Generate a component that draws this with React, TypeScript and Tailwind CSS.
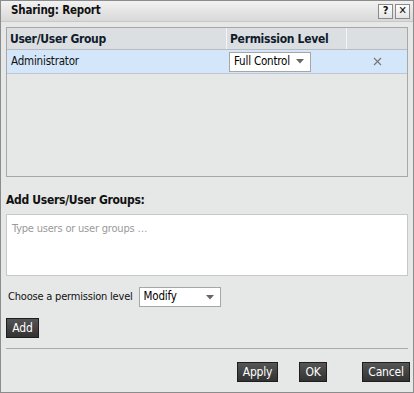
import React from 'react';

const font = { fontFamily: '"DejaVu Sans Condensed", "DejaVu Sans", sans-serif' };

function Caret() {
  return (
    <svg width="8" height="5" viewBox="0 0 8 5" className="shrink-0">
      <path d="M0 0h8L4 4.5z" fill="#666" />
    </svg>
  );
}

function SelectBox({ value }: { value: string }) {
  return (
    <div className="flex h-[20px] w-[82px] items-center justify-between border border-[#a6a6a6] bg-white pl-[4px] pr-[6px] text-[11.5px] tracking-[-0.2px] text-black">
      <span>{value}</span>
      <Caret />
    </div>
  );
}

function DarkButton({ label, width }: { label: string; width: string }) {
  return (
    <button className={`flex h-[20px] items-center justify-center border border-[#1e1e1e] bg-gradient-to-b from-[#555] to-[#333] text-[12px] text-white ${width}`}>
      {label}
    </button>
  );
}

export default function App() {
  return (
    <div style={font} className="flex h-[393px] w-[414px] flex-col border border-[#8c8c8c] bg-[#e6e7e7] text-[11px] tracking-[-0.2px] text-[#111]">
      {/* title bar */}
      <div className="flex h-[21px] items-center justify-between border-b border-[#c8c8c8] bg-gradient-to-b from-[#f2f2f2] to-[#d8d8d8] pl-[10px] pr-[3px]">
        <span className="text-[11.5px] font-bold text-[#111]">Sharing: Report</span>
        <div className="flex gap-[2px]">
          <div className="flex h-[15px] w-[15px] items-center justify-center border border-[#8a8a8a] bg-gradient-to-b from-white to-[#e4e4e4] text-[11px] font-bold">?</div>
          <div className="flex h-[15px] w-[15px] items-center justify-center border border-[#8a8a8a] bg-gradient-to-b from-white to-[#e4e4e4] text-[11px] font-bold">✕</div>
        </div>
      </div>

      <div className="flex flex-1 flex-col px-[5px] pt-[5px]">
        {/* permissions table */}
        <div className="flex h-[150px] flex-col border border-[#a8a8a8]">
          <div className="flex h-[22px] border-b border-[#b8bcc0] bg-[#dcdfe2] text-[12px] font-bold tracking-[-0.3px] text-[#101c2c]">
            <div className="flex w-[220px] items-center border-r border-[#f4f5f6] pl-[3px]">User/User Group</div>
            <div className="flex w-[120px] items-center border-r border-[#f4f5f6] pl-[3px]">Permission Level</div>
            <div className="flex-1" />
          </div>
          <div className="flex h-[24px] items-center border-b border-[#bfc6ce] bg-[#d4e7fa]">
            <div className="w-[221px] pl-[4px] text-[11.5px]">Administrator</div>
            <div className="w-[120px] pl-[1px]">
              <SelectBox value="Full Control" />
            </div>
            <div className="flex flex-1 items-center justify-center">
              <svg width="9" height="9" viewBox="0 0 9 9">
                <path d="M1 1l7 7M8 1L1 8" stroke="#777" strokeWidth="1.2" />
              </svg>
            </div>
          </div>
          <div className="flex-1" />
        </div>

        <div className="mt-[14px] text-[12px] font-bold tracking-[-0.3px]">Add Users/User Groups:</div>
        <div className="mt-[5px] h-[62px] border border-[#c8c8c8] bg-white px-[5px] pt-[6px] text-[#9a9a9a]">
          Type users or user groups …
        </div>

        <div className="mt-[11px] flex items-center gap-[6px] pl-[2px]">
          <span>Choose a permission level</span>
          <SelectBox value="Modify" />
        </div>

        <div className="mt-[11px]">
          <DarkButton label="Add" width="w-[33px]" />
        </div>

        <div className="mt-[10px] h-px bg-[#aaaaaa]" />

        <div className="-mr-[2px] mt-[13px] flex justify-end">
          <DarkButton label="Apply" width="w-[41px]" />
          <div className="ml-[21px]">
            <DarkButton label="OK" width="w-[28px]" />
          </div>
          <div className="ml-[35px]">
            <DarkButton label="Cancel" width="w-[48px]" />
          </div>
        </div>
      </div>
    </div>
  );
}
